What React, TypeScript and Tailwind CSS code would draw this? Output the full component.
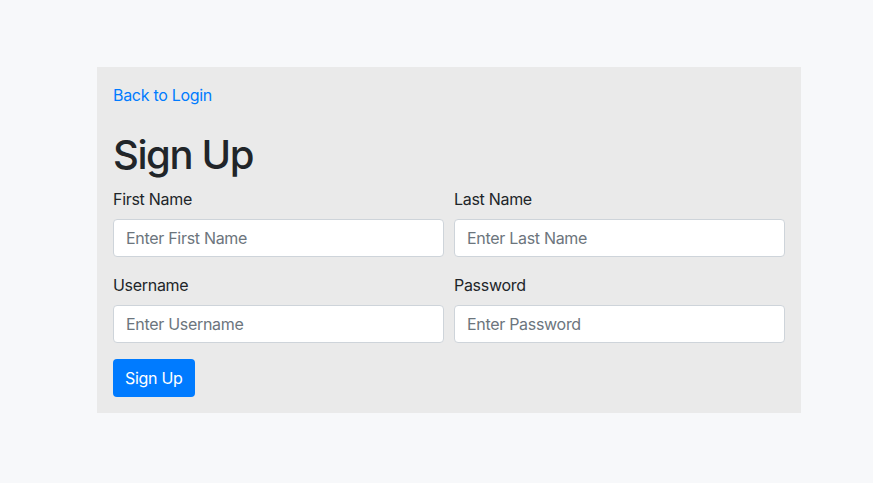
export default function App() {
  const fields = [
    { label: "First Name", placeholder: "Enter First Name" },
    { label: "Last Name", placeholder: "Enter Last Name" },
    { label: "Username", placeholder: "Enter Username" },
    { label: "Password", placeholder: "Enter Password", type: "password" },
  ];

  return (
    <div
      className="min-h-[483px] bg-[#f7f8fa] pl-[97px] pt-[67px] tracking-[-0.3px] text-[#212529]"
      style={{ fontFamily: "Inter, 'Noto Sans', sans-serif" }}
    >
      <div className="w-[704px] bg-[#eaeaea] p-4">
        <a href="#" className="block text-base leading-6 text-[#007bff]">
          Back to Login
        </a>

        <h1 className="mt-6 mb-2 text-[40px] font-medium leading-[48px] tracking-[-1.4px]">Sign Up</h1>

        <form className="grid grid-cols-2 gap-x-[10px]">
          {fields.map((field) => (
            <div key={field.label} className="mb-4">
              <label className="mb-2 block text-base leading-6">{field.label}</label>
              <input
                type={field.type ?? "text"}
                placeholder={field.placeholder}
                className="block h-[38px] w-full rounded border border-[#ced4da] bg-white px-3 text-base tracking-[-0.3px] text-[#495057] outline-none placeholder:text-[#6c757d]"
              />
            </div>
          ))}
        </form>

        <button
          type="button"
          className="h-[38px] rounded bg-[#007bff] px-3 text-base tracking-[-0.3px] text-white"
        >
          Sign Up
        </button>
      </div>
    </div>
  );
}
